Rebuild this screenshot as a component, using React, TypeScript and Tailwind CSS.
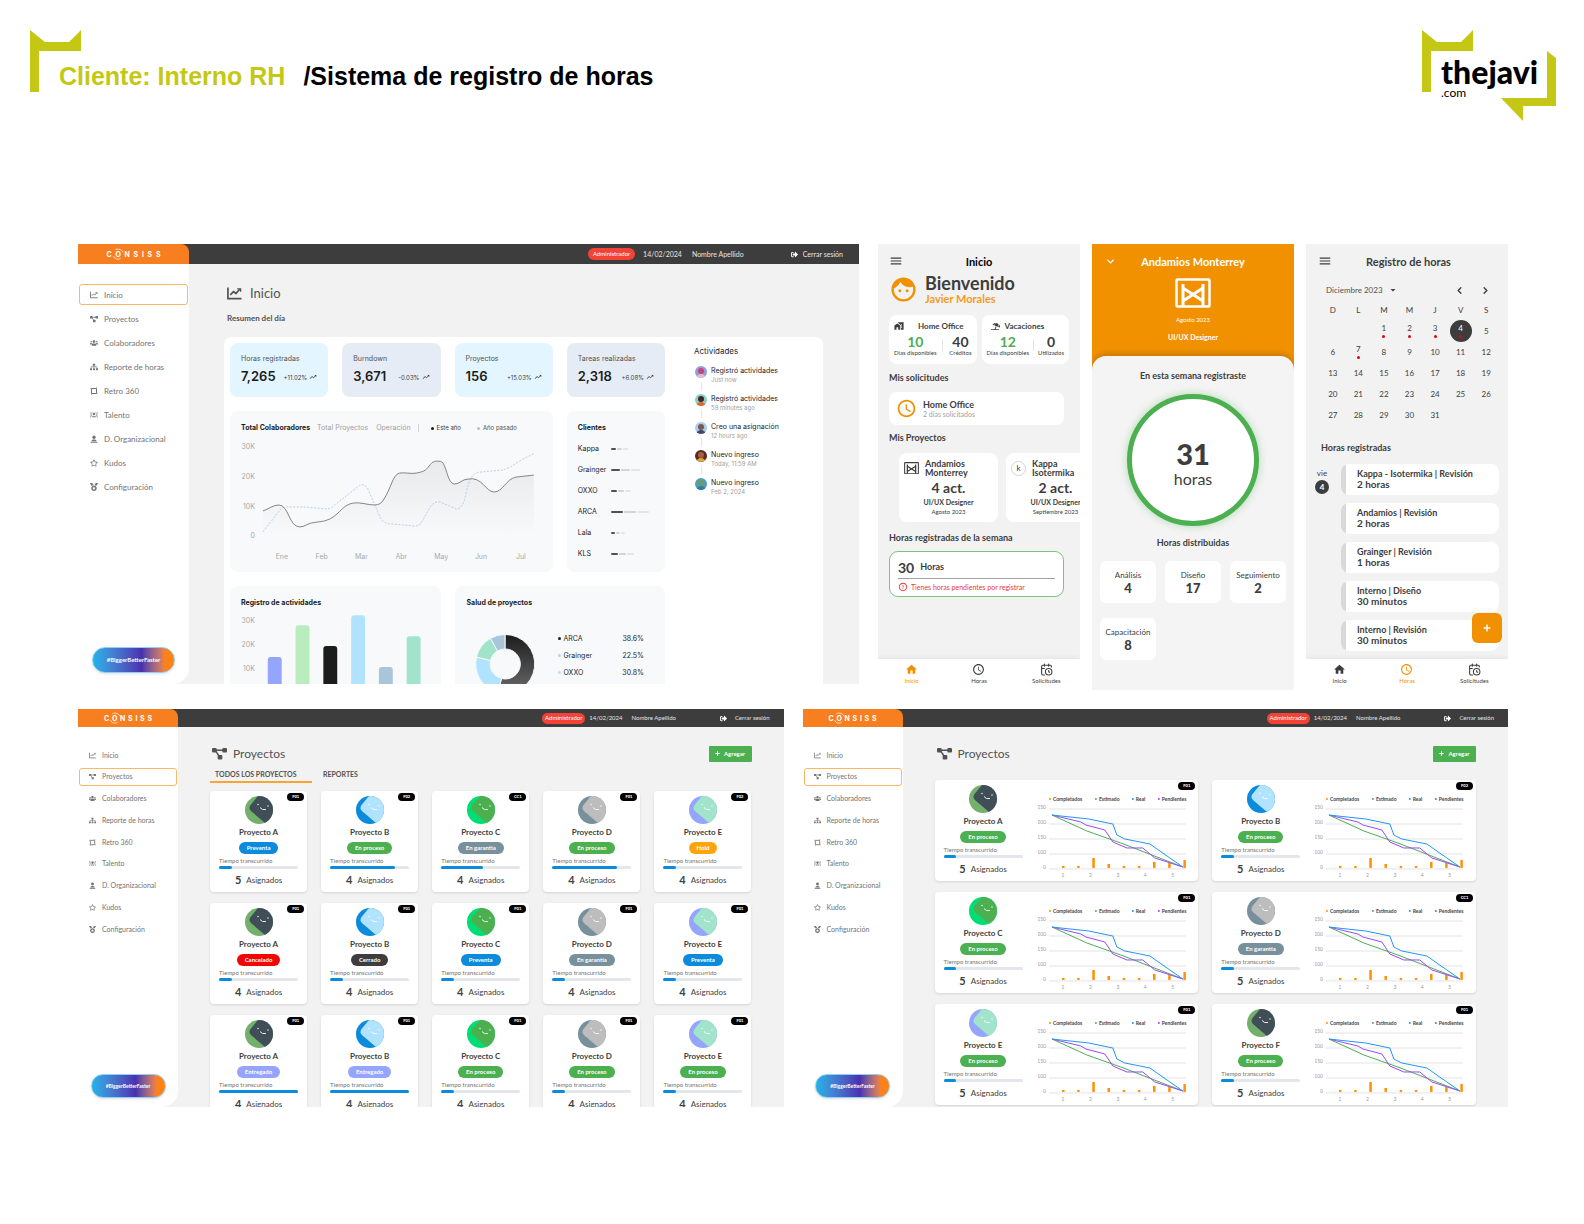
import type { ReactNode } from 'react';
import { CalendarClock, ChevronDown, ChevronLeft, ChevronRight } from 'lucide-react';
import { FaMedal, FaPlus, FaRegStar, FaSignOutAlt, FaSitemap, FaUmbrellaBeach, FaUsers } from 'react-icons/fa';
import {
  MdAccessTime,
  MdArrowDropDown,
  MdErrorOutline,
  MdFace,
  MdHome,
  MdHomeWork,
  MdMenu,
  MdTrendingUp,
} from 'react-icons/md';

type IconProps = { className?: string };

function ChartIcon({ className }: IconProps) {
  return (
    <svg viewBox="0 0 16 14" className={className} fill="none" stroke="currentColor" strokeWidth="1.800">
      <path d="M1 0.500V12.500H15.500" />
      <path d="M3.500 8.500L7 5L9.500 7L13.500 2.500" />
      <path d="M11 2H14.500V5" strokeWidth="1.400" />
    </svg>
  );
}

function NodesIcon({ className }: IconProps) {
  return (
    <svg viewBox="0 0 16 13" className={className} fill="currentColor">
      <rect x="0" y="0.500" width="5" height="5" rx="1.200" />
      <rect x="11" y="0.500" width="5" height="5" rx="1.200" />
      <rect x="6" y="8" width="5" height="5" rx="1.200" />
      <path d="M3 3H13M4 4L8 10" fill="none" stroke="currentColor" strokeWidth="1.600" />
    </svg>
  );
}

function LoopIcon({ className }: IconProps) {
  return (
    <svg viewBox="0 0 16 16" className={className} fill="none" stroke="currentColor" strokeWidth="2">
      <rect x="3" y="3" width="10" height="10" rx="1" />
      <path d="M1 3H3M13 1V3M15 13H13M3 15V13" />
    </svg>
  );
}

function TalentIcon({ className }: IconProps) {
  return (
    <svg viewBox="0 0 16 16" className={className} fill="none" stroke="currentColor" strokeWidth="1.600">
      <path d="M1 3C3 6 3 10 1 13M15 3C13 6 13 10 15 13" />
      <circle cx="8" cy="6" r="2" fill="currentColor" />
      <path d="M4.500 11.500H11.500M5 4L4 3M11 4L12 3" strokeWidth="2" />
    </svg>
  );
}

function PersonIcon({ className }: IconProps) {
  return (
    <svg viewBox="0 0 16 16" className={className} fill="currentColor">
      <circle cx="8" cy="4.500" r="3.300" />
      <path d="M3 12.500C3 9.500 6 9 8 9S13 9.500 13 12.500Z" />
      <rect x="1.500" y="13.500" width="13" height="2" />
    </svg>
  );
}

const NAV = [
  { label: 'Inicio', icon: ChartIcon },
  { label: 'Proyectos', icon: NodesIcon },
  { label: 'Colaboradores', icon: FaUsers },
  { label: 'Reporte de horas', icon: FaSitemap },
  { label: 'Retro 360', icon: LoopIcon },
  { label: 'Talento', icon: TalentIcon },
  { label: 'D. Organizacional', icon: PersonIcon },
  { label: 'Kudos', icon: FaRegStar },
  { label: 'Configuración', icon: FaMedal },
];

const STATS = [
  { label: 'Horas registradas', value: '7,265', change: '+11.02%' },
  { label: 'Burndown', value: '3,671', change: '-0.03%' },
  { label: 'Proyectos', value: '156', change: '+15.03%' },
  { label: 'Tareas realizadas', value: '2,318', change: '+6.08%' },
];

const CLIENTS = [
  { name: 'Kappa', size: 5 },
  { name: 'Grainger', size: 9 },
  { name: 'OXXO', size: 6 },
  { name: 'ARCA', size: 12 },
  { name: 'Lala', size: 4 },
  { name: 'KLS', size: 7 },
];

const ACTIVITIES = [
  { title: 'Registró actividades', time: 'Just now', bg: '#8f9fd6', skin: '#c2457e', body: '#e7b9cf' },
  { title: 'Registró actividades', time: '59 minutes ago', bg: '#8ccfc4', skin: '#3a2a28', body: '#e8642c' },
  { title: 'Creo una asignación', time: '12 hours ago', bg: '#a9cdf0', skin: '#7a5a50', body: '#3d4a66' },
  { title: 'Nuevo ingreso', time: 'Today, 11:59 AM', bg: '#5b2a24', skin: '#a8603c', body: '#d9a441' },
  { title: 'Nuevo ingreso', time: 'Feb 2, 2024', bg: '#4a9fb8', skin: '#6f9a74', body: '#2f7f9c' },
];

const HEALTH = [
  { name: 'ARCA', value: '38.6%', dot: 'bg-[#1c1c1c]' },
  { name: 'Grainger', value: '22.5%', dot: 'bg-[#a1e3cb]' },
  { name: 'OXXO', value: '30.8%', dot: 'bg-[#b1e3ff]' },
];

const ACTIVITY_BARS = [
  { x: 25, top: 46, fill: '#95a4fc' },
  { x: 53, top: 14, fill: '#baedbd' },
  { x: 81, top: 35, fill: '#1c1c1c' },
  { x: 109, top: 4, fill: '#b1e3ff' },
  { x: 137, top: 56, fill: '#a8c5da' },
  { x: 165, top: 25, fill: '#a1e3cb' },
];

const AVATAR_COLORS: Record<string, [string, string]> = {
  A: ['#74b06b', '#3f4e57'],
  B: ['#0a8bdb', '#b1e3ff'],
  C: ['#00dd72', '#4caf50'],
  D: ['#78909c', '#bdbdbd'],
  E: ['#95a4fc', '#a1e3cb'],
  F: ['#74b06b', '#3f4e57'],
};

const STATUS_COLORS: Record<string, string> = {
  Preventa: 'bg-[#0a8bdb]',
  'En proceso': 'bg-[#4caf50]',
  'En garantía': 'bg-[#78909c]',
  Hold: 'bg-[#ffa50a]',
  Cancelado: 'bg-[#f20505]',
  Cerrado: 'bg-[#3d3d3d]',
  Entregado: 'bg-[#95a4fc]',
};

type Project = { name: string; code: string; status: string; progress: number; assigned: number };

const PROJECTS: Project[] = [
  { name: 'A', code: 'F01', status: 'Preventa', progress: 16, assigned: 5 },
  { name: 'B', code: 'F02', status: 'En proceso', progress: 82, assigned: 4 },
  { name: 'C', code: 'CC1', status: 'En garantía', progress: 53, assigned: 4 },
  { name: 'D', code: 'F01', status: 'En proceso', progress: 82, assigned: 4 },
  { name: 'E', code: 'F02', status: 'Hold', progress: 16, assigned: 4 },
  { name: 'A', code: 'F01', status: 'Cancelado', progress: 16, assigned: 4 },
  { name: 'B', code: 'F01', status: 'Cerrado', progress: 16, assigned: 4 },
  { name: 'C', code: 'F01', status: 'Preventa', progress: 16, assigned: 4 },
  { name: 'D', code: 'F01', status: 'En garantía', progress: 16, assigned: 4 },
  { name: 'E', code: 'F01', status: 'Preventa', progress: 16, assigned: 4 },
  { name: 'A', code: 'F01', status: 'Entregado', progress: 100, assigned: 4 },
  { name: 'B', code: 'F01', status: 'Entregado', progress: 100, assigned: 4 },
  { name: 'C', code: 'F01', status: 'En proceso', progress: 16, assigned: 4 },
  { name: 'D', code: 'F01', status: 'En proceso', progress: 16, assigned: 4 },
  { name: 'E', code: 'F01', status: 'En proceso', progress: 16, assigned: 4 },
];

const REPORTS: Project[] = [
  { name: 'A', code: 'F01', status: 'En proceso', progress: 16, assigned: 5 },
  { name: 'B', code: 'F02', status: 'En proceso', progress: 16, assigned: 5 },
  { name: 'C', code: 'F01', status: 'En proceso', progress: 16, assigned: 5 },
  { name: 'D', code: 'CC1', status: 'En garantía', progress: 16, assigned: 5 },
  { name: 'E', code: 'F01', status: 'En proceso', progress: 16, assigned: 5 },
  { name: 'F', code: 'F01', status: 'En proceso', progress: 16, assigned: 5 },
];

const ENTRIES = [
  { title: 'Kappa - Isotermika | Revisión', time: '2 horas' },
  { title: 'Andamios | Revisión', time: '2 horas' },
  { title: 'Grainger | Revisión', time: '1 horas' },
  { title: 'Interno | Diseño', time: '30 minutos' },
  { title: 'Interno | Revisión', time: '30 minutos' },
];

/* ---------- Desktop shell ---------- */

function ConsissLogo({ compact }: { compact?: boolean }) {
  return (
    <div
      aria-label="CONSISS"
      className={`flex items-center justify-between font-[Inter] text-[7px] leading-none font-bold text-white ${
        compact ? 'w-[48px]' : 'w-[54px]'
      }`}
    >
      <span>C</span>
      <span className="relative">
        O
        <svg
          viewBox="0 0 14 14"
          className="absolute -top-[3px] -left-[3px] size-[12px]"
          fill="none"
          stroke="white"
          strokeWidth="0.900"
        >
          <path d="M4 2C7 .5 11 1.500 13 5" />
          <path d="M2 9.500C3 13 7 14 10 12" />
        </svg>
      </span>
      <span>N</span>
      <span>S</span>
      <span>I</span>
      <span>S</span>
      <span>S</span>
    </div>
  );
}

function Shell({
  active,
  compact,
  children,
}: {
  active: string;
  compact?: boolean;
  children: ReactNode;
}) {
  return (
    <div
      className={`relative flex min-w-0 flex-col overflow-hidden bg-[#f2f2f2] font-[Lato,sans-serif] ${
        compact ? 'h-[398px]' : 'h-[440px]'
      }`}
    >
      <header
        className={`flex shrink-0 items-center bg-[#3d3d3d] leading-none text-neutral-200 ${
          compact ? 'h-[18px] pr-[14px] text-[6px]' : 'h-[20px] pr-4 text-[7px]'
        }`}
      >
        <div
          className={`flex h-full items-center justify-center rounded-tr-lg bg-[#f77f1f] ${
            compact ? 'w-[100px]' : 'w-[111px]'
          }`}
        >
          <ConsissLogo compact={compact} />
        </div>
        <span
          className={`ml-auto flex items-center justify-center rounded-full bg-[#f44336] text-[6px] text-white ${
            compact ? 'mr-1 h-[11px] w-[43px]' : 'mr-2 h-[12px] w-[47px]'
          }`}
        >
          Administrador
        </span>
        <span>14/02/2024</span>
        <span className={compact ? 'ml-[9px]' : 'ml-[10px]'}>Nombre Apellido</span>
        <button className={`flex items-center ${compact ? 'ml-[44px] gap-2' : 'ml-[47px] gap-[5px]'}`}>
          <FaSignOutAlt className="size-[7px] text-white" />
          Cerrar sesión
        </button>
      </header>
      <div className="flex min-h-0 flex-1">
        <aside
          className={`flex shrink-0 flex-col justify-between rounded-br-2xl bg-white px-px ${
            compact ? 'w-[100px] pt-[19px] pb-[9px]' : 'w-[111px] pt-[20px] pb-[11px]'
          }`}
        >
          <nav
            className={`flex flex-col justify-between text-neutral-500 ${
              compact ? 'h-[192px] text-[7px]' : 'h-[213px] text-[8px]'
            }`}
          >
            {NAV.map(({ label, icon: Icon }) => (
              <a
                key={label}
                href="#"
                className={`flex items-center rounded-[3px] border leading-none ${
                  compact ? 'h-[18px] gap-[6px] pl-[9px]' : 'h-[21px] gap-[6px] pl-[10px]'
                } ${label === active ? 'border-[#fbb862]' : 'border-transparent'}`}
              >
                <Icon className={compact ? 'size-[7px]' : 'size-[8px]'} />
                {label}
              </a>
            ))}
          </nav>
          <button
            className={`self-center rounded-full border border-[#8fd0f5] bg-linear-to-r from-[#1db2e8] via-[#4a2fb0] via-60% to-[#ff8212] to-90% leading-none font-bold text-white shadow-sm ${
              compact ? 'h-[24px] w-[75px] text-[5px]' : 'h-[26px] w-[83px] text-[6px]'
            }`}
          >
            #BiggerBetterFaster
          </button>
        </aside>
        <main className="min-w-0 flex-1">{children}</main>
      </div>
    </div>
  );
}

/* ---------- Dashboard ---------- */

function TotalsChart() {
  const months = ['Ene', 'Feb', 'Mar', 'Abr', 'May', 'Jun', 'Jul'];
  const solid =
    'M20 73C26 71 30 67 36 67C46 67 46 89 57 89C62 89 64 86 69 85C74 84 77 84 82 83C97 79 98 67 111 65C118 64 125 67 132 67C137 67 139 65 141 62C149 50 150 37 157 35C163 34 168 36 174 35C178 34 180 34 183 32C187 29 189 23 194 23C198 23 199 23 201 25C205 32 206 45 212 46C218 46 220 41 226 41C240 38 244 54 252 54C261 54 264 41 274 39L292 37';
  return (
    <svg viewBox="-2 0 302 126" className="mt-[6px] h-[126px] w-full" fontFamily="Inter" fontSize="7">
      <defs>
        <linearGradient id="area" x1="0" y1="0" x2="0" y2="1">
          <stop offset="0" stopColor="#1c1c1c" stopOpacity="0.07" />
          <stop offset="1" stopColor="#1c1c1c" stopOpacity="0" />
        </linearGradient>
      </defs>
      <g fill="#a8a9ab" textAnchor="end">
        <text x="12" y="11">30K</text>
        <text x="12" y="41">20K</text>
        <text x="12" y="71">10K</text>
        <text x="12" y="100">0</text>
      </g>
      <g fill="#a8a9ab" textAnchor="middle">
        {months.map((m, i) => (
          <text key={m} x={39 + i * 40} y="121">
            {m}
          </text>
        ))}
      </g>
      <path d={`${solid}V98H20Z`} fill="url(#area)" />
      <path
        d="M20 94L38 71Q40 69 44 69L62 69L84 71Q88 71 92 67L115 49Q121 44 125 50L138 80Q141 86 150 86L170 88Q176 89 179 85L188 69Q192 63 198 64L214 71Q221 72 224 55Q228 35 237 34L260 32Q266 31 279 22L293 15"
        fill="none"
        stroke="#a8c5da"
        strokeWidth="0.8"
        strokeDasharray="2 1.500"
      />
      <path d={solid} fill="none" stroke="#77787a" strokeWidth="0.9" />
    </svg>
  );
}

function Dashboard() {
  return (
    <Shell active="Inicio">
      <div className="pt-[21px] pr-9 pl-[35px]">
        <h2 className="flex h-4 items-center gap-2 pl-[3px] text-[13px] leading-none text-neutral-600">
          <ChartIcon className="size-[15px]" />
          Inicio
        </h2>
        <p className="mt-3 pl-[3px] text-[8px] leading-[10px] font-bold text-neutral-600">Resumen del día</p>

        <div className="mt-[14px] flex h-[360px] gap-[29px] rounded-t-lg bg-white p-[6px] font-[Inter,sans-serif] text-[7px] text-[#1c1c1c]">
          <div className="grid flex-[435] grid-cols-4 content-start gap-[14px]">
            {STATS.map((stat, i) => (
              <div
                key={stat.label}
                className={`rounded-lg px-[11px] pt-3 pb-[13px] ${i % 2 ? 'bg-[#e5ecf6]' : 'bg-[#e3f5ff]'}`}
              >
                <p className="text-[7px] leading-[8px] text-neutral-600">{stat.label}</p>
                <div className="mt-[7px] flex h-[14px] items-center justify-between">
                  <span className="text-[13px] font-semibold">{stat.value}</span>
                  <span className="flex items-center gap-[2px] text-[6px] text-neutral-700">
                    {stat.change}
                    <MdTrendingUp className="size-[8px]" />
                  </span>
                </div>
              </div>
            ))}

            <section className="col-span-3 rounded-lg bg-[#f7f9fb] px-[11px] pt-[13px] pb-2">
              <div className="flex items-center leading-[8px] text-neutral-400">
                <button className="font-bold text-[#1c1c1c]">Total Colaboradores</button>
                <button className="ml-[7px]">Total Proyectos</button>
                <button className="ml-2">Operación</button>
                <span className="ml-[7px] h-2 w-px bg-neutral-300" />
                <span className="ml-3 size-[3px] rounded-full bg-[#1c1c1c]" />
                <span className="ml-[3px] text-[6px] text-neutral-700">Este año</span>
                <span className="ml-4 size-[3px] rounded-full bg-[#a8c5da]" />
                <span className="ml-[3px] text-[6px] text-neutral-600">Año pasado</span>
              </div>
              <TotalsChart />
            </section>

            <section className="rounded-lg bg-[#f7f9fb] px-[11px] pt-[13px] pb-2">
              <h3 className="mb-[6px] leading-[8px] font-bold">Clientes</h3>
              {CLIENTS.map((client) => (
                <div key={client.name} className="flex h-[21px] items-center text-[7px] text-neutral-800">
                  <span className="w-[33px] leading-none">{client.name}</span>
                  <span className="flex gap-px">
                    <span className="h-[2px] rounded-full bg-neutral-600" style={{ width: client.size }} />
                    <span className="h-[2px] rounded-full bg-neutral-300" style={{ width: client.size }} />
                    <span className="h-[2px] rounded-full bg-neutral-200" style={{ width: client.size }} />
                  </span>
                </div>
              ))}
            </section>

            <section className="col-span-2 h-[110px] rounded-lg bg-[#f7f9fb] px-[11px] pt-[13px]">
              <h3 className="leading-[8px] font-bold">Registro de actividades</h3>
              <svg viewBox="-2 0 190 82" className="mt-1 h-[82px] w-full" fontFamily="Inter" fontSize="7">
                <g fill="#a8a9ab" textAnchor="end">
                  <text x="12" y="12">30K</text>
                  <text x="12" y="36">20K</text>
                  <text x="12" y="60">10K</text>
                </g>
                {ACTIVITY_BARS.map((bar) => (
                  <rect key={bar.x} x={bar.x} y={bar.top} width="14" height="90" rx="3" fill={bar.fill} />
                ))}
              </svg>
            </section>

            <section className="col-span-2 h-[110px] rounded-lg bg-[#f7f9fb] pt-[13px] pr-[21px] pl-3">
              <h3 className="leading-[8px] font-bold">Salud de proyectos</h3>
              <div className="flex pt-[23px] pl-2">
                <svg viewBox="0 0 60 60" className="mt-1 size-[60px]" stroke="#f7f9fb">
                  <defs>
                    <linearGradient id="ring" x1="0" y1="0" x2="0" y2="1">
                      <stop offset="0" stopColor="#1c1c1c" />
                      <stop offset="1" stopColor="#6b6b6b" />
                    </linearGradient>
                  </defs>
                  <path d="M30 0.500A29.500 29.500 0 1 1 23 58.600L26.500 44.500A15 15 0 1 0 30 15Z" fill="url(#ring)" />
                  <path d="M23 58.600A29.500 29.500 0 0 1 1.500 23L15.500 26.500A15 15 0 0 0 26.500 44.500Z" fill="#b1e3ff" />
                  <path d="M1.500 23A29.500 29.500 0 0 1 15.500 4.300L22.500 17A15 15 0 0 0 15.500 26.500Z" fill="#a1e3cb" />
                  <path d="M15.500 4.300A29.500 29.500 0 0 1 30 0.500V15A15 15 0 0 0 22.500 17Z" fill="#a8c5da" />
                </svg>
                <dl className="ml-[23px] flex-1 text-neutral-800">
                  {HEALTH.map((row) => (
                    <div key={row.name} className="flex h-[17px] items-center text-[7px] leading-none">
                      <span className={`mr-[3px] size-[3px] rounded-full ${row.dot}`} />
                      <dt>{row.name}</dt>
                      <dd className="ml-auto">{row.value}</dd>
                    </div>
                  ))}
                </dl>
              </div>
            </section>
          </div>

          <section className="flex-[123] pt-1">
            <h3 className="mb-[10px] text-[8px] leading-[9px] text-neutral-800">Actividades</h3>
            {ACTIVITIES.map((item, i) => (
              <div key={i} className="flex h-7 gap-[4px] pl-px">
                <div className="flex flex-col items-center">
                  <svg viewBox="0 0 12 12" className="size-[12px] shrink-0 rounded-full">
                    <rect width="12" height="12" fill={item.bg} />
                    <ellipse cx="6" cy="12" rx="4.500" ry="4" fill={item.body} />
                    <circle cx="6" cy="5" r="3" fill={item.skin} />
                  </svg>
                  {i < ACTIVITIES.length - 1 && <span className="my-1 w-px flex-1 bg-neutral-200" />}
                </div>
                <div className="whitespace-nowrap">
                  <p className="text-[7px] leading-[9px]">{item.title}</p>
                  <p className="text-[6px] leading-[9px] text-neutral-400">{item.time}</p>
                </div>
              </div>
            ))}
          </section>
        </div>
      </div>
    </Shell>
  );
}

/* ---------- Projects ---------- */

function ProjectAvatar({ name }: { name: string }) {
  const [back, front] = AVATAR_COLORS[name];
  const clip = `avatar-${name}`;
  return (
    <svg viewBox="0 0 28 28" className="size-[28px]">
      <clipPath id={clip}>
        <circle cx="14" cy="14" r="14" />
      </clipPath>
      <g clipPath={`url(#${clip})`}>
        <rect width="28" height="28" fill={back} />
        <path d="M13 0L5.500 9Q3 12.500 6.500 15.500L20 27H28V0Z" fill={front} />
        <circle cx="13" cy="8.500" r="0.700" fill="white" />
        <circle cx="23" cy="10" r="0.700" fill="white" />
        <path d="M15 11.500Q17 14.500 21 13.500" fill="none" stroke="white" strokeWidth="0.900" />
      </g>
    </svg>
  );
}

function ProjectSummary({ project }: { project: Project }) {
  return (
    <div className="flex flex-col items-center px-[9px] pt-[5px] pb-[6px] text-neutral-700">
      <ProjectAvatar name={project.name} />
      <h3 className="mt-[2px] text-[8px] leading-[12px] font-bold">Proyecto {project.name}</h3>
      <span
        className={`mt-1 flex h-[12px] items-center rounded-full px-2 text-[6px] leading-none font-bold text-white ${STATUS_COLORS[project.status]}`}
      >
        {project.status}
      </span>
      <p className="mt-[3px] w-full text-[6px] leading-[7px] text-neutral-500">Tiempo transcurrido</p>
      <div className="mt-[2px] h-[3px] w-full rounded-full bg-[#e3e6ea]">
        <div className="h-full rounded-full bg-[#0a8bdb]" style={{ width: `${project.progress}%` }} />
      </div>
      <p className="mt-[5px] flex items-center gap-[5px] text-[8px] leading-[12px]">
        <strong className="text-[11px]">{project.assigned}</strong>
        Asignados
      </p>
    </div>
  );
}

function CodeBadge({ code }: { code: string }) {
  return (
    <span className="absolute top-[2px] right-[3px] flex h-[8px] w-[17px] items-center justify-center rounded-full bg-black text-[4px] font-black text-white">
      {code}
    </span>
  );
}

function ProjectsHeading() {
  return (
    <div className="flex h-[17px] items-center justify-between">
      <h2 className="flex items-center gap-[6px] pl-[2px] text-[12px] leading-none text-neutral-600">
        <NodesIcon className="size-[15px]" />
        Proyectos
      </h2>
      <button className="flex h-[16px] w-[43px] items-center justify-center gap-1 rounded-[1px] bg-[#4caf50] text-[6px] leading-none font-bold text-white">
        <FaPlus className="size-[5px]" />
        Agregar
      </button>
    </div>
  );
}

function Projects() {
  return (
    <Shell active="Proyectos" compact>
      <div className="px-8 pt-[18px]">
        <ProjectsHeading />
        <div className="mt-[7px] flex gap-[6px] text-left text-[7px] leading-[10px] font-bold text-neutral-600">
          <button className="w-[102px] border-b-2 border-[#f8a535] pb-[2px] pl-[5px] text-left">
            TODOS LOS PROYECTOS
          </button>
          <button className="border-b-2 border-transparent px-[5px] pb-[2px]">REPORTES</button>
        </div>
        <div className="mt-2 grid grid-cols-5 gap-x-[14px] gap-y-[11px]">
          {PROJECTS.map((project, i) => (
            <article key={i} className="relative rounded-[4px] bg-white shadow-sm">
              <CodeBadge code={project.code} />
              <ProjectSummary project={project} />
            </article>
          ))}
        </div>
      </div>
    </Shell>
  );
}

function BurndownChart() {
  const bars = [2, 2, 10, 4, 2, 2, 6, 5, 8];
  const legend = [
    { label: 'Completados', x: 11, fill: '#ff9100' },
    { label: 'Estimado', x: 57, fill: '#4caf50' },
    { label: 'Real', x: 94, fill: '#2196f3' },
    { label: 'Pendientes', x: 120, fill: '#9747ff' },
  ];
  return (
    <svg viewBox="0 0 152 86" className="h-[86px] w-full" fontFamily="Lato" fontSize="5">
      {legend.map((item) => (
        <g key={item.label}>
          <circle cx={item.x + 1} cy="6" r="1" fill={item.fill} />
          <text x={item.x + 4} y="8" fontWeight="700" fill="#444">
            {item.label}
          </text>
        </g>
      ))}
      {[250, 200, 150, 100, 0].map((value, i) => (
        <g key={value}>
          <line x1="11" x2="148" y1={16 + i * 15} y2={16 + i * 15} stroke="#dcdcdc" strokeWidth="0.800" />
          <text x="8" y={16 + i * 15} textAnchor="end" fill="#9a9a9a">
            {value}
          </text>
        </g>
      ))}
      {[1, 2, 3, 4, 5].map((value, i) => (
        <text key={value} x={25 + i * 27.5} y="84" textAnchor="middle" fill="#9a9a9a">
          {value}
        </text>
      ))}
      {bars.map((height, i) => (
        <rect key={i} x={24 + i * 15.2} y={75 - height} width="2.500" height={height} fill="#ff9100" />
      ))}
      <g fill="none" strokeWidth="1">
        <path d="M14 22L49 38L83 50L145 74" stroke="#4caf50" />
        <path d="M14 22L43 29L48 32L67 37L75 49L89 55H105L117 65L145 74" stroke="#9747ff" />
        <path d="M14 22L51 26L75 31L79 42L87 46L112 51L145 74" stroke="#2196f3" />
      </g>
    </svg>
  );
}

function Reports() {
  return (
    <Shell active="Proyectos" compact>
      <div className="px-8 pt-[18px]">
        <ProjectsHeading />
        <div className="mt-[18px] grid grid-cols-2 gap-x-[14px] gap-y-[11px]">
          {REPORTS.map((project) => (
            <article key={project.name} className="relative flex gap-[6px] rounded-[4px] bg-white pr-[9px] shadow-sm">
              <CodeBadge code={project.code} />
              <div className="w-[97px] shrink-0">
                <ProjectSummary project={project} />
              </div>
              <div className="min-w-0 flex-1 pt-[13px]">
                <BurndownChart />
              </div>
            </article>
          ))}
        </div>
      </div>
    </Shell>
  );
}

/* ---------- Mobile ---------- */

function ScaffoldIcon({ className }: IconProps) {
  return (
    <svg viewBox="0 0 36 30" className={className} fill="none" stroke="currentColor" strokeWidth="2.500">
      <rect x="1.500" y="1.500" width="33" height="27" rx="1" />
      <path d="M8 6V28M28 6V28M8 10L28 23M28 10L8 23" strokeWidth="3" />
    </svg>
  );
}

function BottomNav({ active }: { active: string }) {
  const items = [
    { label: 'Inicio', icon: MdHome },
    { label: 'Horas', icon: MdAccessTime },
    { label: 'Solicitudes', icon: CalendarClock },
  ];
  return (
    <nav className="mt-auto grid h-[31px] shrink-0 grid-cols-3 bg-white pt-1 text-[6px] leading-none shadow-[0_-2px_4px_rgba(0,0,0,0.05)]">
      {items.map(({ label, icon: Icon }) => (
        <a
          key={label}
          href="#"
          className={`flex flex-col items-center gap-[2px] ${label === active ? 'text-[#f29100]' : 'text-[#3d3d3d]'}`}
        >
          <Icon className="size-[13px]" />
          {label}
        </a>
      ))}
    </nav>
  );
}

function PhoneTitle({ children, icon }: { children: ReactNode; icon: ReactNode }) {
  return (
    <div className="grid h-[36px] shrink-0 grid-cols-[30px_1fr_30px] items-center pb-[2px] text-[11px] leading-none font-bold">
      {icon}
      <h2 className="text-center whitespace-nowrap">{children}</h2>
    </div>
  );
}

function BalanceCard({
  heading,
  available,
  other,
  otherLabel,
}: {
  heading: ReactNode;
  available: number;
  other: number;
  otherLabel: string;
}) {
  return (
    <article className="rounded-lg bg-white px-[5px] pt-[6px] pb-2">
      <h3 className="flex items-center text-[8px] leading-[10px] font-bold">{heading}</h3>
      <div className="mt-[3px] flex items-center justify-between text-center text-[6px] leading-[7px]">
        <p className="whitespace-nowrap">
          <strong className="block text-[14px] leading-[15px] text-[#4caf50]">{available}</strong>
          Días disponibles
        </p>
        <span className="h-3 w-px bg-neutral-200" />
        <p>
          <strong className="block text-[14px] leading-[15px]">{other}</strong>
          {otherLabel}
        </p>
      </div>
    </article>
  );
}

function ProjectTile({ icon, name, acts, date }: { icon: ReactNode; name: [string, string]; acts: number; date: string }) {
  return (
    <article className="w-[99px] shrink-0 rounded-lg bg-white px-[5px] pt-[6px] pb-[7px] text-center">
      <div className="flex items-center gap-[6px] text-left text-[9px] leading-[9px] font-bold">
        {icon}
        <h4>
          {name[0]}
          <br />
          {name[1]}
        </h4>
      </div>
      <p className="mt-1 text-[14px] leading-[14px] font-bold">{acts} act.</p>
      <p className="mt-[3px] text-[7px] leading-[8px] font-bold">UI/UX Designer</p>
      <p className="mt-[2px] text-[6px] leading-[7px]">{date}</p>
    </article>
  );
}

function HomePhone() {
  return (
    <div className="flex h-[446px] flex-col overflow-hidden bg-[#f2f2f2] text-[#3d3d3d]">
      <div className="px-[11px]">
        <PhoneTitle icon={<MdMenu className="size-[14px]" />}>
          <span className="text-black">Inicio</span>
        </PhoneTitle>
        <div className="-mt-[6px] flex items-center gap-[7px]">
          <MdFace className="size-[29px] text-[#f29100]" />
          <div className="font-bold">
            <p className="text-[18px] leading-[19px]">Bienvenido</p>
            <p className="text-[11px] leading-[12px] text-[#f59a1c]">Javier Morales</p>
          </div>
        </div>
        <div className="mt-[10px] grid grid-cols-2 gap-[5px]">
          <BalanceCard
            heading={
              <>
                <MdHomeWork className="mr-[14px] size-[10px]" />
                Home Office
              </>
            }
            available={10}
            other={40}
            otherLabel="Créditos"
          />
          <BalanceCard
            heading={
              <>
                <FaUmbrellaBeach className="mr-[5px] ml-1 size-[9px]" />
                Vacaciones
              </>
            }
            available={12}
            other={0}
            otherLabel="Utilizados"
          />
        </div>
        <h3 className="mt-[9px] text-[9px] leading-[10px] font-bold">Mis solicitudes</h3>
        <article className="mt-[9px] mr-[5px] flex h-[33px] items-center gap-[6px] rounded-lg bg-white pl-[7px]">
          <MdAccessTime className="size-[21px] text-[#f29100]" />
          <div>
            <p className="text-[9px] leading-[11px] font-bold">Home Office</p>
            <p className="text-[7px] leading-[9px] text-neutral-400">2 días solicitados</p>
          </div>
        </article>
        <h3 className="mt-2 text-[9px] leading-[10px] font-bold">Mis Proyectos</h3>
        <div className="-mr-[11px] mt-[10px] flex gap-2 overflow-hidden pl-[10px]">
          <ProjectTile
            icon={<ScaffoldIcon className="w-[15px]" />}
            name={['Andamios', 'Monterrey']}
            acts={4}
            date="Agosto 2023"
          />
          <ProjectTile
            icon={
              <span className="flex size-[15px] items-center justify-center rounded-full border border-neutral-300 text-[8px] font-normal">
                k
              </span>
            }
            name={['Kappa', 'Isotermika']}
            acts={2}
            date="Septiembre 2023"
          />
        </div>
        <h3 className="mt-[11px] text-[9px] leading-[10px] font-bold">Horas registradas de la semana</h3>
        <article className="mt-2 mr-[5px] h-[46px] rounded-[9px] border border-[#7cc47f] bg-white px-2 pt-2">
          <p className="flex h-[14px] items-center gap-[6px] text-[9px] font-bold">
            <span className="text-[14px]">30</span>
            Horas
          </p>
          <p className="mt-1 flex items-center gap-[3px] border-t border-neutral-400 pt-[3px] text-[7px] leading-[9px] whitespace-nowrap text-[#e53935]">
            <MdErrorOutline className="size-[10px]" />
            Tienes horas pendientes por registrar
          </p>
        </article>
      </div>
      <BottomNav active="Inicio" />
    </div>
  );
}

function ProjectPhone() {
  const hours = [
    { label: 'Análisis', value: 4 },
    { label: 'Diseño', value: 17 },
    { label: 'Seguimiento', value: 2 },
    { label: 'Capacitación', value: 8 },
  ];
  return (
    <div className="flex h-[446px] flex-col overflow-hidden bg-[#f29100] text-[#3d3d3d]">
      <div className="flex h-[112px] shrink-0 flex-col px-[11px] text-center text-white">
        <PhoneTitle icon={<ChevronDown className="ml-[2px] size-[11px]" strokeWidth={3} />}>Andamios Monterrey</PhoneTitle>
        <ScaffoldIcon className="-mt-[2px] h-[30px] self-center" />
        <p className="mt-2 text-[6px] leading-[8px]">Agosto 2023</p>
        <p className="mt-[9px] text-[7px] leading-[9px] font-bold">UI/UX Designer</p>
      </div>
      <div className="flex flex-1 flex-col items-center rounded-t-[14px] bg-[#f4f4f4] px-2 pt-[15px] shadow-[0_-2px_6px_rgba(0,0,0,0.2)]">
        <h3 className="text-[9px] leading-[10px] font-bold">En esta semana registraste</h3>
        <div className="mt-[13px] flex size-[132px] flex-col items-center justify-center rounded-full border-5 border-[#4caf50] bg-white pt-2 shadow-[0_0_8px_rgba(76,175,80,0.4)]">
          <strong className="text-[29px] leading-[30px] font-black">31</strong>
          <span className="text-[16px] leading-[20px]">horas</span>
        </div>
        <h3 className="mt-[12px] text-[9px] leading-[10px] font-bold">Horas distribuidas</h3>
        <div className="mt-[13px] grid w-full grid-cols-3 gap-x-[9px] gap-y-[15px]">
          {hours.map((item) => (
            <div key={item.label} className="flex h-[42px] flex-col items-center justify-center rounded-md bg-white">
              <span className="text-[8px] leading-[12px]">{item.label}</span>
              <strong className="text-[13px] leading-[15px] font-black">{item.value}</strong>
            </div>
          ))}
        </div>
      </div>
    </div>
  );
}

function HoursPhone() {
  const marked = [1, 2, 3, 4, 7];
  // The month starts on a Tuesday
  const cells = [null, null, ...Array.from({ length: 31 }, (_, i) => i + 1)];
  return (
    <div className="relative flex h-[446px] flex-col overflow-hidden bg-[#f2f2f2] text-[#3d3d3d]">
      <div className="min-h-0 flex-1 overflow-hidden pr-[9px] pl-[12px]">
        <PhoneTitle icon={<MdMenu className="size-[14px]" />}>Registro de horas</PhoneTitle>
        <div className="flex h-[17px] items-center pt-[3px] pr-2 pl-2 text-[8px]">
          <select
            aria-label="Mes"
            defaultValue="Diciembre 2023"
            className="appearance-none bg-transparent leading-none text-neutral-600"
          >
            <option>Diciembre 2023</option>
          </select>
          <MdArrowDropDown className="ml-1 size-[12px]" />
          <button aria-label="Mes anterior" className="ml-auto">
            <ChevronLeft className="size-[11px]" strokeWidth={3} />
          </button>
          <button aria-label="Mes siguiente" className="ml-[15px]">
            <ChevronRight className="size-[11px]" strokeWidth={3} />
          </button>
        </div>
        <div className="ml-[2px] mt-[2px] grid auto-rows-[21px] grid-cols-7 text-[8px]">
          {['D', 'L', 'M', 'M', 'J', 'V', 'S'].map((day, i) => (
            <span key={i} className="flex items-center justify-center">
              {day}
            </span>
          ))}
          {cells.map((day, i) =>
            day === null ? (
              <span key={i} />
            ) : (
              <button
                key={i}
                className={`flex size-[22px] flex-col items-center justify-center gap-[3px] justify-self-center rounded-full leading-none ${
                  day === 4 ? 'bg-[#3d3d3d] text-white' : ''
                }`}
              >
                {day}
                {marked.includes(day) && <span className="size-[3px] rounded-full bg-red-600" />}
              </button>
            )
          )}
        </div>
        <h3 className="mt-[18px] pl-[3px] text-[9px] leading-[10px] font-bold">Horas registradas</h3>
        <div className="mt-[11px] -ml-[3px] flex gap-[12px]">
          <div className="flex w-[14px] flex-col items-center gap-[3px] pt-[5px] text-[8px] leading-[8px]">
            vie
            <span className="flex size-[14px] items-center justify-center rounded-full bg-[#3d3d3d] font-bold text-white">
              4
            </span>
          </div>
          <ul className="flex flex-1 flex-col gap-2">
            {ENTRIES.map((entry, i) => (
              <li key={i} className="flex h-[31px] overflow-hidden rounded-lg bg-white font-bold whitespace-nowrap">
                <span className="w-[5px] bg-[#d9d9d9]" />
                <div className="pt-[4px] pl-[11px]">
                  <p className="text-[9px] leading-[11px]">{entry.title}</p>
                  <p className="text-[10px] leading-[11px]">{entry.time}</p>
                </div>
              </li>
            ))}
            <li className="flex h-[31px] overflow-hidden rounded-lg bg-white">
              <span className="w-[5px] bg-[#d9d9d9]" />
            </li>
          </ul>
        </div>
      </div>
      <button
        aria-label="Agregar horas"
        className="absolute right-[6px] bottom-[47px] flex size-[30px] items-center justify-center rounded-md bg-[#f29100] text-white"
      >
        <FaPlus className="size-[8px]" />
      </button>
      <BottomNav active="Horas" />
    </div>
  );
}

/* ---------- Page ---------- */

export default function App() {
  return (
    <div className="min-h-screen bg-white">
      <header className="flex items-start justify-between pt-[30px] pr-7 pl-[30px]">
        <div className="relative pt-[31px] pl-[29px] font-['Liberation_Sans',Arial,sans-serif]">
          <svg viewBox="0 0 51 62" className="absolute top-0 left-0 h-[62px] w-[51px]" fill="#c4c815">
            <path d="M0 0L15 12H39L51 0V21H9V62H0Z" />
          </svg>
          <h1 className="relative flex gap-[18px] text-[25px] leading-[30px] font-bold text-black">
            <span className="text-[#c4c815]">Cliente: Interno RH</span>
            <span>/Sistema de registro de horas</span>
          </h1>
        </div>
        <a
          href="#"
          className="relative block h-[91px] w-[134px] pt-[27px] pl-[19px] font-[Lato,sans-serif] text-black"
        >
          <svg viewBox="0 0 134 91" className="absolute top-0 left-0 h-[91px] w-[134px]" fill="#c4c815">
            <path d="M0 0L15 12H39L51 0V21H9V62H0Z" />
            <path d="M125 21L134 28V76H101V91L79 68H125Z" />
          </svg>
          <span className="relative block text-[32px] leading-[30px] font-black">thejavi</span>
          <span className="relative block text-[12px] leading-[12px]">.com</span>
        </a>
      </header>

      <div className="flex flex-col gap-[19px] pt-[123px] pr-[76px] pb-[117px] pl-[78px]">
        <div className="flex items-start gap-[19px]">
          <div className="min-w-0 flex-[781]">
            <Dashboard />
          </div>
          <div className="grid min-w-0 flex-[630] grid-cols-3 gap-3 font-[Lato,sans-serif]">
            <HomePhone />
            <ProjectPhone />
            <HoursPhone />
          </div>
        </div>
        <div className="grid grid-cols-2 gap-[19px]">
          <Projects />
          <Reports />
        </div>
      </div>
    </div>
  );
}
